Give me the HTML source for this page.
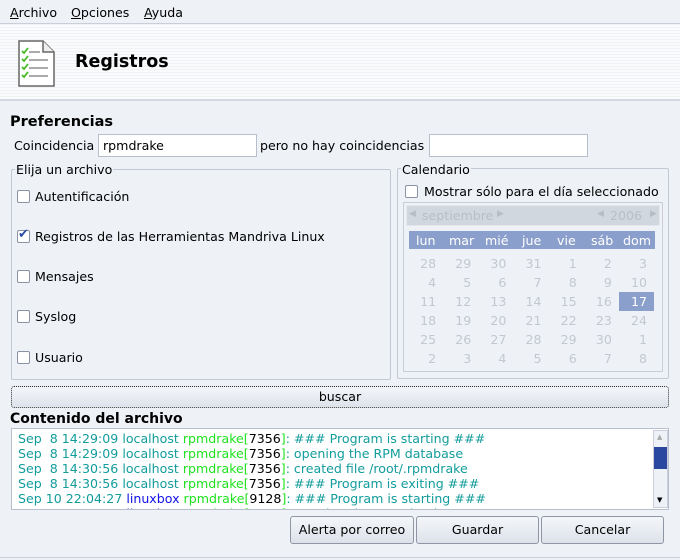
<!DOCTYPE html>
<html><head><meta charset="utf-8"><style>
*{box-sizing:border-box}
body{margin:0;width:680px;height:560px;background:#eef1f6;font-family:"DejaVu Sans",sans-serif;font-size:12.6px;color:#000;position:relative;overflow:hidden}
.a{position:absolute;white-space:nowrap}
.menu{left:0;top:0;width:680px;height:24px;border-bottom:1px solid #c9ced8}
.menu span{position:absolute;top:5px}
.banner{left:0;top:25px;width:680px;height:76px;background:repeating-linear-gradient(#fafbfc 0 2px,#f0f2f5 2px 3px);border-bottom:2px solid #d4d8e0}
.b{font-weight:bold}
.inp{background:#fff;border:1px solid #b8bfcc;height:23px;padding:3px 4px}
.frame{border:1px solid #c2c9d4;border-radius:2px}
.leg{background:#eef1f6;padding:0 1px}
.cb{width:13px;height:13px;background:#fff;border:1px solid #8a93a4;border-radius:2px}
.btn{border:1px solid #8e96a5;border-radius:3px;background:linear-gradient(#f4f6f9,#dde2ea);text-align:center;line-height:26px}
.cal td{width:35.3px;text-align:right;padding-right:8px;color:#c3c8d0;height:19px;padding-top:1px}
.log div{height:15px}
.c{color:#139c9c}.g{color:#1ee21e}.k{color:#000}.bl{color:#1111e8}
</style></head><body>
<div class="a menu"><span style="left:10px"><u>A</u>rchivo</span><span style="left:71px"><u>O</u>pciones</span><span style="left:144px"><u>A</u>yuda</span></div>
<div class="a banner"></div>
<svg class="a" style="left:18px;top:40px" width="38" height="48" viewBox="0 0 38 48">
<path d="M1 1H25L36 12V46H1Z" fill="#fff" stroke="#666" stroke-width="1.5"/>
<path d="M25 1V12H36" fill="#eee" stroke="#666" stroke-width="1.5"/>
<g stroke="#aaa" stroke-width="2"><line x1="11" y1="12" x2="22" y2="12"/><line x1="11" y1="20" x2="30" y2="20"/><line x1="11" y1="28" x2="30" y2="28"/><line x1="11" y1="36" x2="30" y2="36"/></g>
<g stroke="#44bb22" stroke-width="1.8" fill="none"><path d="M4 11l2 2 4-5"/><path d="M4 19l2 2 4-5"/><path d="M4 27l2 2 4-5"/><path d="M4 35l2 2 4-5"/></g>
</svg>
<div class="a b" style="left:75px;top:52px;font-size:17.5px">Registros</div>
<div class="a b" style="left:10px;top:114px;font-size:14.5px">Preferencias</div>
<div class="a" style="left:14px;top:138px">Coincidencia</div>
<div class="a inp" style="left:98px;top:134px;width:159px">rpmdrake</div>
<div class="a" style="left:260px;top:138px">pero no hay coincidencias</div>
<div class="a inp" style="left:429px;top:134px;width:159px"></div>
<div class="a frame" style="left:11px;top:169px;width:380px;height:211px"></div>
<div class="a leg" style="left:15px;top:162px">Elija un archivo</div>
<div class="a cb" style="left:17px;top:190px"></div><div class="a" style="left:35px;top:189px">Autentificación</div>
<div class="a cb" style="left:17px;top:230px"></div><div class="a" style="left:18px;top:227px;color:#2a4aa8;font-size:13px">✔</div><div class="a" style="left:35px;top:229px">Registros de las Herramientas Mandriva Linux</div>
<div class="a cb" style="left:17px;top:270px"></div><div class="a" style="left:35px;top:269px">Mensajes</div>
<div class="a cb" style="left:17px;top:310px"></div><div class="a" style="left:35px;top:309px">Syslog</div>
<div class="a cb" style="left:17px;top:351px"></div><div class="a" style="left:35px;top:350px">Usuario</div>
<div class="a frame" style="left:397px;top:168px;width:272px;height:211px"></div>
<div class="a leg" style="left:401px;top:162px">Calendario</div>
<div class="a cb" style="left:405px;top:185px"></div><div class="a" style="left:424px;top:184px">Mostrar sólo para el día seleccionado</div>
<div class="a" style="left:403px;top:202px;width:260px;height:170px;border:1px solid #c8ced8"></div>
<div class="a" style="left:406px;top:205px;width:254px;height:21px;background:#d0d7df;border:1px solid #e4e8ee;color:#b8bec8"><span class="a" style="left:2px;top:3px;font-size:9px">◀</span><span class="a" style="left:15px;top:2px">septiembre</span><span class="a" style="left:90px;top:3px;font-size:9px">▶</span><span class="a" style="left:190px;top:3px;font-size:9px">◀</span><span class="a" style="left:203px;top:2px">2006</span><span class="a" style="left:243px;top:3px;font-size:9px">▶</span></div>
<div class="a" style="left:409px;top:231px;width:246px;height:18px;background:#8a9fcb;color:#fff"><span class="a" style="left:7px;top:2px">lun</span><span class="a" style="left:40px;top:2px">mar</span><span class="a" style="left:76px;top:2px">mié</span><span class="a" style="left:113px;top:2px">jue</span><span class="a" style="left:148px;top:2px">vie</span><span class="a" style="left:182px;top:2px">sáb</span><span class="a" style="left:214px;top:2px">dom</span></div>
<div class="a" style="left:619px;top:292px;width:35px;height:19px;background:#8a9fcb"></div>
<table class="a cal" style="left:409px;top:254px;border-collapse:collapse;width:246px">
<tr><td>28</td><td>29</td><td>30</td><td>31</td><td>1</td><td>2</td><td>3</td></tr>
<tr><td>4</td><td>5</td><td>6</td><td>7</td><td>8</td><td>9</td><td>10</td></tr>
<tr><td>11</td><td>12</td><td>13</td><td>14</td><td>15</td><td>16</td><td style="color:#fff">17</td></tr>
<tr><td>18</td><td>19</td><td>20</td><td>21</td><td>22</td><td>23</td><td>24</td></tr>
<tr><td>25</td><td>26</td><td>27</td><td>28</td><td>29</td><td>30</td><td>1</td></tr>
<tr><td>2</td><td>3</td><td>4</td><td>5</td><td>6</td><td>7</td><td>8</td></tr>
</table>
<div class="a btn" style="left:11px;top:386px;width:658px;height:22px;line-height:20px;border:1px dotted #333">buscar</div>
<div class="a b" style="left:10px;top:411px;font-size:14px">Contenido del archivo</div>
<div class="a" style="left:11px;top:428px;width:658px;height:82px;background:#fff;border:1px solid #b8bfcc;overflow:hidden">
<div class="a log" style="left:6px;top:2px;font-size:12.6px">
<div class="c">Sep&nbsp; 8 14:29:09 localhost <span class="g">rpmdrake[</span><span class="k">7356</span><span class="g">]</span>: ### Program is starting ###</div>
<div class="c">Sep&nbsp; 8 14:29:09 localhost <span class="g">rpmdrake[</span><span class="k">7356</span><span class="g">]</span>: opening the RPM database</div>
<div class="c">Sep&nbsp; 8 14:30:56 localhost <span class="g">rpmdrake[</span><span class="k">7356</span><span class="g">]</span>: created file /root/.rpmdrake</div>
<div class="c">Sep&nbsp; 8 14:30:56 localhost <span class="g">rpmdrake[</span><span class="k">7356</span><span class="g">]</span>: ### Program is exiting ###</div>
<div class="c">Sep 10 22:04:27 <span class="bl">linuxbox</span> <span class="g">rpmdrake[</span><span class="k">9128</span><span class="g">]</span>: ### Program is starting ###</div>
<div class="c">Sep 10 22:04:28 <span class="bl">linuxbox</span> <span class="g">rpmdrake[</span><span class="k">9128</span><span class="g">]</span>: opening the RPM database</div>
</div>
<div class="a" style="left:641px;top:1px;width:15px;height:78px;background:#eef1f6;border:1px solid #ccd">
<div class="a" style="left:3px;top:2px;font-size:7px;color:#aaa">▲</div>
<div class="a" style="left:0;top:16px;width:13px;height:22px;background:#2b48a0"></div>
<div class="a" style="left:3px;top:65px;font-size:7px">▼</div></div>
</div>
<div class="a btn" style="left:290px;top:516px;width:124px;height:28px">Alerta por correo</div>
<div class="a btn" style="left:416px;top:516px;width:123px;height:28px">Guardar</div>
<div class="a btn" style="left:541px;top:516px;width:123px;height:28px">Cancelar</div>
<div class="a" style="left:0;top:557px;width:680px;height:1px;background:#c9ced8"></div>
</body></html>
